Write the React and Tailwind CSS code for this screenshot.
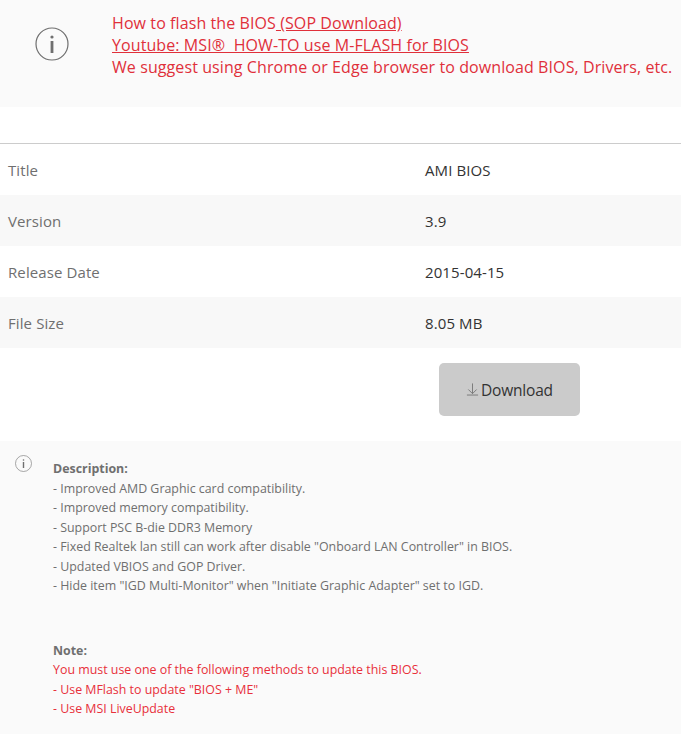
import React from "react";

const FONT = "font-['Open_Sans','Noto_Sans',sans-serif]";

const ROWS = [
  { label: "Title", value: "AMI BIOS", bg: "bg-white" },
  { label: "Version", value: "3.9", bg: "bg-[#f8f8f8]" },
  { label: "Release Date", value: "2015-04-15", bg: "bg-white" },
  { label: "File Size", value: "8.05 MB", bg: "bg-[#f8f8f8]" },
];

const DESCRIPTION = [
  "- Improved AMD Graphic card compatibility.",
  "- Improved memory compatibility.",
  "- Support PSC B-die DDR3 Memory",
  '- Fixed Realtek lan still can work after disable "Onboard LAN Controller" in BIOS.',
  "- Updated VBIOS and GOP Driver.",
  '- Hide item "IGD Multi-Monitor" when "Initiate Graphic Adapter" set to IGD.',
];

const NOTE = [
  "You must use one of the following methods to update this BIOS.",
  '- Use MFlash to update "BIOS + ME"',
  "- Use MSI LiveUpdate",
];

function InfoIcon({ className }) {
  return (
    <svg viewBox="0 0 34 34" className={className} fill="none" stroke="#6f6f6f">
      <circle cx="17" cy="17" r="16" strokeWidth="1.2" />
      <circle cx="17" cy="10" r="1.6" fill="#6f6f6f" stroke="none" />
      <rect x="15.6" y="14" width="2.8" height="12" fill="#6f6f6f" stroke="none" />
    </svg>
  );
}

export default function App() {
  return (
    <div className={`${FONT} w-[681px] h-[734px] overflow-hidden bg-white`}>
      {/* Notice */}
      <div className="h-[107px] bg-[#fafafa] flex">
        <div className="w-[112px] shrink-0 pt-[27px] pl-[35px]">
          <InfoIcon className="w-[34px] h-[34px]" />
        </div>
        <div className="pt-[12px] text-[16px] leading-[22px] tracking-[0.09px] text-[#e0303a] whitespace-nowrap">
          <p>
            How to flash the BIOS<a className="underline"> (SOP Download)</a>
          </p>
          <p>
            <a className="underline">Youtube: MSI®&nbsp; HOW-TO use M-FLASH for BIOS</a>
          </p>
          <p>We suggest using Chrome or Edge browser to download BIOS, Drivers, etc.</p>
        </div>
      </div>

      {/* Spec table */}
      <div className="mt-[36px] border-t border-[#cccccc]">
        {ROWS.map((r) => (
          <div key={r.label} className={`${r.bg} h-[51px] pt-[2px] flex items-center text-[15px] tracking-[0.1px]`}>
            <div className="w-[425px] pl-[8px] text-[#6f6f6f]">{r.label}</div>
            <div className="text-[#333333]">{r.value}</div>
          </div>
        ))}
      </div>

      {/* Download */}
      <div className="h-[93px] pt-[15px] pl-[439px]">
        <button className="w-[141px] h-[53px] pt-[2px] rounded-[5px] bg-[#cbcbcb] flex items-center justify-center text-[15.5px] tracking-[-0.2px] text-[#333333]">
          <svg viewBox="0 0 14 14" className="w-[13px] h-[14px] mb-[3px] mr-[2px]" fill="none" stroke="#777777" strokeWidth="1">
            <path d="M7 1v11M2.500 7.500L7 12l4.500-4.500M1 13.500h12" />
          </svg>
          Download
        </button>
      </div>

      {/* Description */}
      <div className="h-[293px] bg-[#fafafa] flex">
        <div className="w-[53px] shrink-0 pt-[14px] pl-[15px]">
          <InfoIcon className="w-[17px] h-[17px]" />
        </div>
        <div className="pt-[18px] text-[12.4px] leading-[19.5px] text-[#6f6f6f] whitespace-nowrap">
          <p className="font-bold">Description:</p>
          {DESCRIPTION.map((line) => (
            <p key={line}>{line}</p>
          ))}
          <p className="font-bold mt-[45px]">Note:</p>
          {NOTE.map((line) => (
            <p key={line} className="text-[#e8303a]">{line}</p>
          ))}
        </div>
      </div>
    </div>
  );
}
